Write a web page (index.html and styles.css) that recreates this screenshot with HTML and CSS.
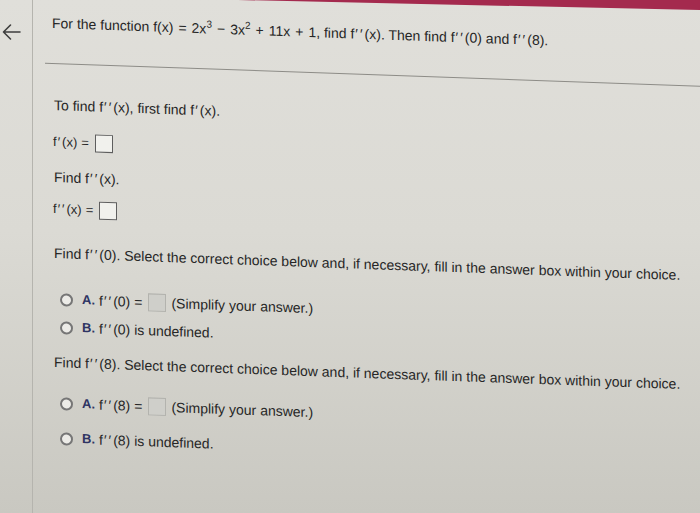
FILE: index.html
```html
<!DOCTYPE html>
<html>
<head>
<meta charset="utf-8">
<link rel="stylesheet" href="styles.css">
</head>
<body>
<div class="app">
  <aside class="side">
    <svg class="back" width="20" height="18" viewBox="0 0 20 18">
      <path d="M19 9H2.5M9.5 2L2.5 9l7 7" fill="none" stroke="#3e3e3e" stroke-width="1.6" stroke-linecap="round" stroke-linejoin="round"/>
    </svg>
  </aside>
  <main class="main">
    <div class="topbar"></div>
    <div class="content">
      <p class="line title">For the function f(x)<span class="op">=</span>2x<sup>3</sup><span class="op">−</span>3x<sup>2</sup><span class="op">+</span>11x<span class="op">+</span>1, find f<span class="pr">′′</span>(x). Then find f<span class="pr">′′</span>(0) and f<span class="pr">′′</span>(8).</p>
      <div class="rule"></div>
      <p class="line l-tofind">To find f<span class="pr">′′</span>(x), first find f<span class="pr">′</span>(x).</p>
      <div class="line eq l-fp"><span>f<span class="pr">′</span>(x)<span class="op">=</span></span><span class="box"></span></div>
      <p class="line l-find2">Find f<span class="pr">′′</span>(x).</p>
      <div class="line eq l-fpp"><span>f<span class="pr">′′</span>(x)<span class="op">=</span></span><span class="box"></span></div>
      <p class="line l-q0">Find f<span class="pr">′′</span>(0). Select the correct choice below and, if necessary, fill in the answer box within your choice.</p>
      <div class="line choice l-a0"><span class="radio"></span><b class="key">A.</b><span class="expr">f<span class="pr">′′</span>(0)<span class="op">=</span></span><span class="box grey"></span><span class="hint">(Simplify your answer.)</span></div>
      <div class="line choice l-b0"><span class="radio"></span><b class="key">B.</b><span class="expr">f<span class="pr">′′</span>(0) is undefined.</span></div>
      <p class="line l-q8">Find f<span class="pr">′′</span>(8). Select the correct choice below and, if necessary, fill in the answer box within your choice.</p>
      <div class="line choice l-a8"><span class="radio"></span><b class="key">A.</b><span class="expr">f<span class="pr">′′</span>(8)<span class="op">=</span></span><span class="box grey"></span><span class="hint">(Simplify your answer.)</span></div>
      <div class="line choice l-b8"><span class="radio"></span><b class="key">B.</b><span class="expr">f<span class="pr">′′</span>(8) is undefined.</span></div>
    </div>
  </main>
</div>
</body>
</html>
```
FILE: styles.css
```css
html, body {
  margin: 0;
  padding: 0;
}
body {
  width: 700px;
  height: 513px;
  overflow: hidden;
  background: linear-gradient(180deg, #e0dfda 0%, #dbdad4 45%, #c9c8c1 100%);
  font-family: "Liberation Sans", Arial, sans-serif;
  color: #262626;
}
.app {
  display: flex;
  height: 513px;
}
.side {
  flex: none;
  width: 33px;
  border-right: 1px solid #b5b4ae;
  padding-top: 23px;
  box-sizing: border-box;
}
.back {
  display: block;
  margin-left: 1px;
}
.main {
  flex: 1;
  min-width: 0;
  overflow: hidden;
}
.topbar {
  height: 10px;
  margin-left: 205px;
  background: #a42a4e;
  clip-path: polygon(0 0, 100% 0, 100% 100%);
}
.content {
  padding-left: 19px;
  transform: skewY(2deg);
  transform-origin: 19px 0;
}
.line {
  margin: 0;
  font-size: 14px;
  line-height: 18px;
  white-space: nowrap;
}
.pr {
  letter-spacing: 2px;
  margin-left: 1px;
}
.op {
  margin: 0 5px;
}
sup {
  font-size: 10px;
  line-height: 0;
  vertical-align: 6px;
}
.title { margin-top: 4px; }
.rule {
  margin-top: 31px;
  margin-left: -7px;
  border-top: 1px solid #8d8c87;
}
.l-tofind { margin-top: 32px; margin-left: 2px; }
.eq { display: flex; align-items: center; gap: 3px; font-size: 13px; margin-left: 1px; }
.eq .op { margin: 0 3px 0 4px; }
.l-fp { margin-top: 19px; }
.l-find2 { margin-top: 17px; margin-left: 2px; }
.l-fpp { margin-top: 14px; }
.l-q0 { margin-top: 26px; margin-left: 2px; }
.l-a0 { margin-top: 28px; }
.l-b0 { margin-top: 10px; }
.l-q8 { margin-top: 17px; margin-left: 2px; }
.l-a8 { margin-top: 23px; }
.l-b8 { margin-top: 17px; }
.box {
  display: inline-block;
  width: 16px;
  height: 16px;
  border: 1px solid #5e5e5e;
  background: #f1f1ed;
}
.box.grey {
  width: 16px;
  height: 16px;
  border-color: #b3b3ae;
  background: #cfcfca;
}
.choice {
  display: flex;
  align-items: center;
  margin-left: 8px;
  font-size: 14px;
}
.radio {
  flex: none;
  width: 9px;
  height: 9px;
  border: 2px solid #767676;
  border-radius: 50%;
  background: #ecebe7;
}
.key {
  margin-left: 9px;
  width: 17px;
  color: #2e3463;
  font-size: 13px;
}
.choice .op { margin: 0 3px 0 4px; }
.choice .box { margin-left: 3px; }
.hint { margin-left: 5px; }
```
